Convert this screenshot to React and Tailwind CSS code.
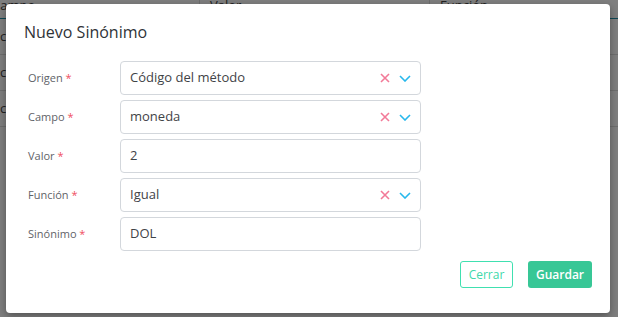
import React from 'react';

const font = { fontFamily: '"Open Sans", "Noto Sans", sans-serif' };

function Row({ label, value, select }) {
    return (
        <div className="flex items-center h-[34px]">
            <div className="w-[94px] pl-[2px] text-[11px] text-[#5f6368]">
                {label} <span className="text-[#ef4f5f]">*</span>
            </div>
            <div className="flex items-center w-[301px] h-[34px] border border-[#d3d7dc] rounded-[4px] pl-[9px] pr-[9px]">
                <span className="flex-1 text-[13px] text-[#3f4347]">{value}</span>
                {select && (
                    <div className="flex items-center gap-[9px]">
                        <svg width="10" height="10" viewBox="0 0 10 10">
                            <path d="M1 1L9 9M9 1L1 9" stroke="#f27a98" strokeWidth="1.6" />
                        </svg>
                        <svg width="12" height="7" viewBox="0 0 12 7">
                            <path d="M1 1l5 5L11 1" stroke="#27b8ec" strokeWidth="1.6" fill="none" />
                        </svg>
                    </div>
                )}
            </div>
        </div>
    );
}

export default function App() {
    return (
        <div className="relative w-[618px] h-[317px] overflow-hidden bg-white" style={font}>
            {/* Table behind the dialog */}
            <div className="text-[13px] text-[#444]">
                <div className="flex h-[19px] items-end border-b border-[#1a8ea8]">
                    <div className="w-[207px] -ml-[8px] pb-[3px]">Campo</div>
                    <div className="w-[230px] pl-[10px] pb-[3px] border-l border-[#ddd]">Valor</div>
                    <div className="flex-1 pl-[10px] pb-[3px] border-l border-[#ddd]">Función</div>
                </div>
                <div className="h-[36px] flex items-center border-b border-[#ddd]">c</div>
                <div className="h-[36px] flex items-center border-b border-[#ddd]">c</div>
                <div className="h-[36px] flex items-center border-b border-[#ddd]">c</div>
            </div>
            <div className="absolute inset-0 bg-black/50" />

            {/* Dialog */}
            <div className="absolute left-[6px] top-[4px] w-[604px] h-[309px] bg-white rounded-[4px] shadow-[0_3px_8px_rgba(0,0,0,0.35)] flex flex-col">
                <div className="pt-[17px] px-[18px] text-[16px] text-[#2f3337] leading-[22px]">Nuevo Sinónimo</div>
                <div className="flex flex-col gap-[5px] mt-[18px] pl-[20px]">
                    <Row label="Origen" value="Código del método" select />
                    <Row label="Campo" value="moneda" select />
                    <Row label="Valor" value="2" />
                    <Row label="Función" value="Igual" select />
                    <Row label="Sinónimo" value="DOL" />
                </div>
                <div className="flex justify-end gap-[15px] pr-[18px] mt-[10px]">
                    <button className="w-[53px] h-[27px] rounded-[3px] border border-[#40e0b0] text-[12px] text-[#40d8aa] bg-white">Cerrar</button>
                    <button className="w-[64px] h-[27px] rounded-[3px] bg-[#38c796] text-[12px] font-semibold text-white">Guardar</button>
                </div>
            </div>
        </div>
    );
}
